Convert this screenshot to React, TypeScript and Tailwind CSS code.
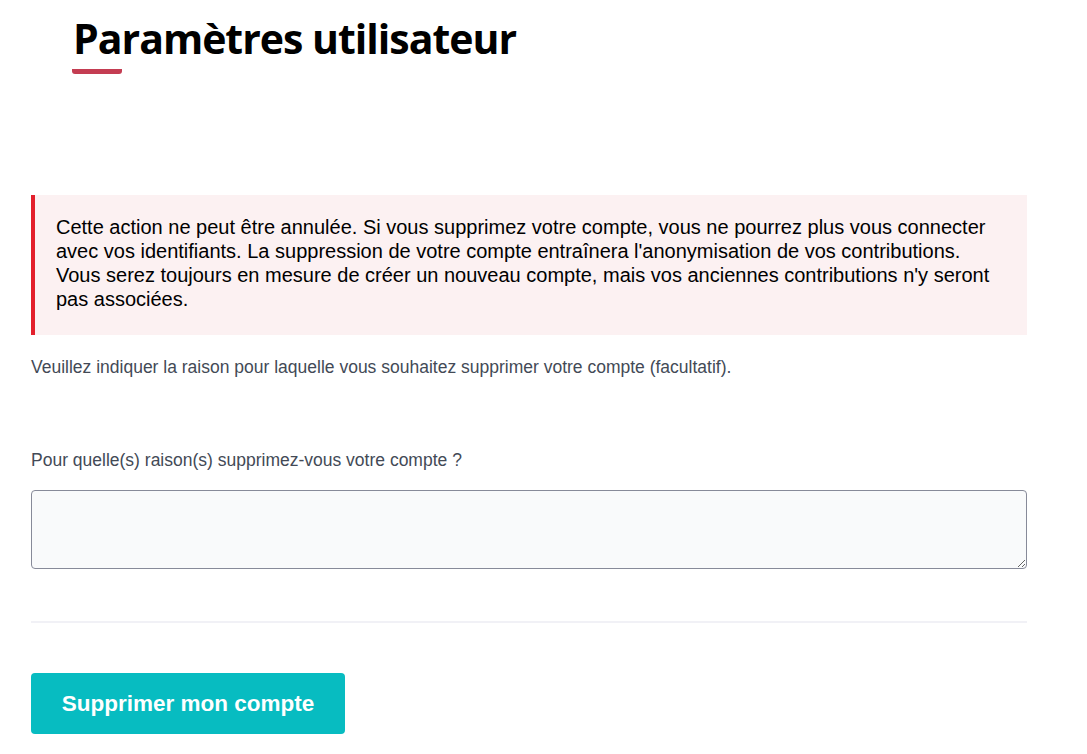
export default function App() {
  return (
    <div className="min-h-screen bg-white" style={{ fontFamily: '"Liberation Sans", Arial, sans-serif' }}>
      <div className="w-[996px] ml-[31px]">
        {/* Header */}
        <div className="pl-[42px] pt-[12px]">
          <h1
            className="text-[41px] leading-[52px] font-bold text-black tracking-[-1px]"
            style={{ fontFamily: '"Open Sans", "Noto Sans", sans-serif' }}
          >
            Paramètres utilisateur
          </h1>
          <div className="mt-[5px] ml-[-1px] h-[5px] w-[50px] rounded-b-[3px] bg-[#c43d52]" />
        </div>

        {/* Warning */}
        <div className="mt-[121px] border-l-4 border-[#e3202c] bg-[#fcf1f2] pl-[21px] pr-8 pt-[20px] pb-[24px]">
          <p className="text-[20px] leading-[24px] text-black">
            Cette action ne peut être annulée. Si vous supprimez votre compte, vous ne pourrez plus vous connecter
            avec vos identifiants. La suppression de votre compte entraînera l'anonymisation de vos contributions.
            Vous serez toujours en mesure de créer un nouveau compte, mais vos anciennes contributions n'y seront
            pas associées.
          </p>
        </div>

        <p className="mt-[20px] text-[17.5px] leading-[24px] text-[#434a56]">
          Veuillez indiquer la raison pour laquelle vous souhaitez supprimer votre compte (facultatif).
        </p>

        {/* Reason field */}
        <label className="mt-[69px] block text-[17.5px] leading-[24px] text-[#434a56]">
          Pour quelle(s) raison(s) supprimez-vous votre compte ?
        </label>
        <textarea className="mt-[18px] block h-[79px] w-full rounded-[4px] border border-[#878a99] bg-[#f9fafb] px-3 py-2 text-[16px]" />

        <hr className="mt-[52px] border-t-2 border-[#f1f1f6]" />

        <button className="mt-[50px] h-[61px] w-[314px] rounded-[4px] bg-[#07bcc1] text-[22.5px] font-bold text-white">
          Supprimer mon compte
        </button>
      </div>
    </div>
  );
}
